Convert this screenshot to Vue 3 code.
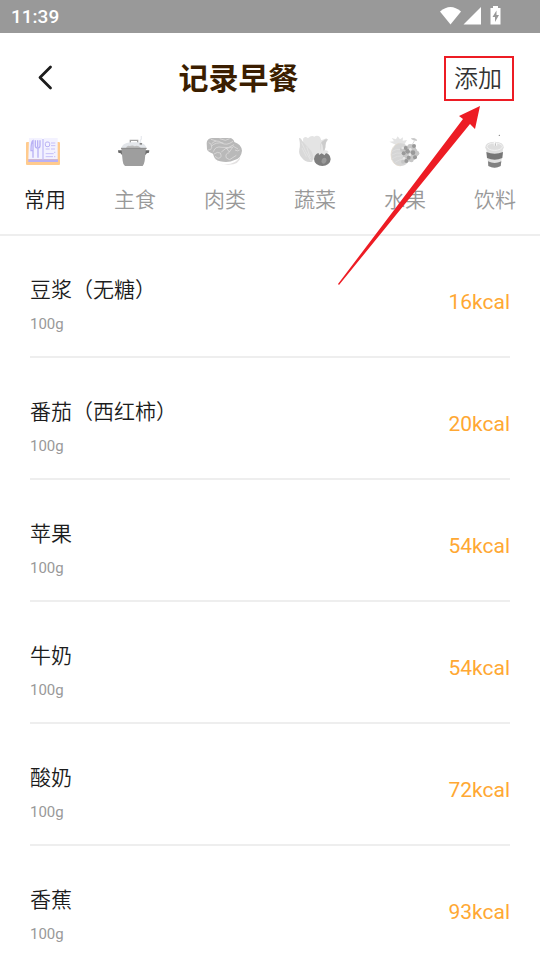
<script setup>
import { ref } from 'vue'

const tabs = ['常用', '主食', '肉类', '蔬菜', '水果', '饮料']
const active = ref(0)

const foods = [
  { name: '豆浆（无糖）', amount: '100g', kcal: 16 },
  { name: '番茄（西红柿）', amount: '100g', kcal: 20 },
  { name: '苹果', amount: '100g', kcal: 54 },
  { name: '牛奶', amount: '100g', kcal: 54 },
  { name: '酸奶', amount: '100g', kcal: 72 },
  { name: '香蕉', amount: '100g', kcal: 93 },
]
</script>

<template>
  <div class="screen">
    <div class="status">
      <span class="clock">11:39</span>
      <svg class="status-icons" width="64" height="22" viewBox="0 0 64 22" aria-hidden="true">
        <path d="M0 5.500Q10.500 -3.500 21 5.500L10.500 18.500Z" fill="#fff" />
        <path d="M41 1V18.500H23.500Z" fill="#fff" />
        <path d="M53 0h5v2h2.500v16.500h-10V2H53Z" fill="#fff" />
        <path d="M56.500 4.500L52.500 11h2.500v5l4-7h-2.500Z" fill="#999" />
      </svg>
    </div>

    <header class="header">
      <button class="back" type="button" aria-label="返回">
        <svg width="16" height="26" viewBox="0 0 16 26">
          <path d="M13.500 2L3 12.500L13.500 23" fill="none" stroke="#1c1c1c" stroke-width="2.800" stroke-linecap="round" stroke-linejoin="round" />
        </svg>
      </button>
      <h1 class="title">记录早餐</h1>
      <div class="action">
        <button class="add" type="button">添加</button>
        <svg class="arrow" width="144" height="182" viewBox="0 0 144 182" aria-hidden="true">
          <path d="M142 1L137 24L132 19L1 180L0 179L125 14L121 11Z" fill="#ed1c24" />
        </svg>
      </div>
    </header>

    <nav class="tabs">
      <button
        v-for="(tab, i) in tabs"
        :key="tab"
        type="button"
        class="tab"
        :class="{ active: i === active }"
        @click="active = i"
      >
        <svg class="tab-icon" width="40" height="36" viewBox="45 27 120 108" aria-hidden="true">
          <g v-if="i === 0">
            <rect x="48" y="51" width="102" height="69" rx="3" fill="#ffcb8e" />
            <path d="M55 103H144V111H55Z" fill="#b9b1f5" />
            <path d="M57 39H95L99 43L103 39H143V102H55Z" fill="#f3f2ff" />
            <path d="M99 42V105" stroke="#c5bff8" stroke-width="4" />
            <path d="M69 98V47Q63 50 63 77H69M84 98V69M76 46V62Q76 69 83 69Q90 69 90 62V46M83 46V66" fill="none" stroke="#b9b1f5" stroke-width="4" />
            <rect x="106" y="51" width="13" height="14" rx="5" fill="none" stroke="#b9b1f5" stroke-width="3" />
            <path d="M123 54h13M123 62h13M107 72h12M123 72h12M107 86h24M132 82h4M107 95h22M132 95h4" stroke="#c5bff8" stroke-width="3" />
          </g>
          <g v-else-if="i === 1">
            <path d="M91 54V46H113V54" fill="none" stroke="#a2a2a2" stroke-width="4" />
            <path d="M122 54Q119 46 124 42V33" fill="none" stroke="#e9ebef" stroke-width="4" />
            <path d="M63 72Q66 54 91 52H117Q138 55 140 72Z" fill="#e3e6ea" />
            <path d="M78 70Q80 60 89 63Q98 59 104 64Q113 59 122 68V72Z" fill="#bdbdbd" />
            <path d="M119 54h7v5h-7Z" fill="#888" />
            <path d="M54 76h13v14q-4-1-5-5l-7-2ZM148 76h-13v14q4-1 5-5l7-2Z" fill="#696969" />
            <path d="M64 70H138L134 108Q132 119 128 123H75Q69 119 68 107Z" fill="#9e9e9e" />
            <path d="M63 70H140" stroke="#888" stroke-width="3" />
          </g>
          <g v-else-if="i === 2">
            <path d="M70 91Q76 111 94 116Q131 124 151 95Q150 118 115 119Q77 121 70 91Z" fill="#e4e2e2" />
            <path d="M50 54Q51 40 66 39H119Q130 40 133 51Q154 58 156 77Q154 99 134 105Q117 114 90 109Q73 105 69 86Q54 82 51 73Z" fill="#b9b9b9" />
            <path d="M56 53Q66 55 65 67Q65 76 54 75M65 56Q79 42 94 53T129 49M63 43L79 48M89 41L106 46L119 41M65 63Q76 51 100 54M70 80Q76 62 96 67T132 59M72 87Q83 79 91 84Q98 99 84 100L75 94M94 81L109 69L118 81L130 64L144 72M108 71L126 66M118 83Q104 85 109 99L119 104L139 91M135 75Q143 80 149 75" fill="none" stroke="#e4e2e2" stroke-width="2" />
          </g>
          <g v-else-if="i === 3">
            <path d="M69 41Q75 32 84 40Q93 30 103 35Q111 29 120 36L124 46L139 40L144 44Q137 48 136 69L130 93L96 106L71 78Z" fill="#e4e4e4" />
            <path d="M57 40Q62 37 67 48L94 78Q103 94 97 110Q78 115 66 99Q55 89 58 72Q62 61 57 40Z" fill="#d9d9d9" />
            <path d="M65 53L77 79L93 108M66 69L79 95M80 65L91 99" fill="none" stroke="#e8e8e8" stroke-width="2" />
            <path d="M122 78Q116 52 132 46Q137 40 144 44Q136 49 136 67L133 78Z" fill="#ccc" />
            <ellipse cx="127" cy="102" rx="25" ry="21" fill="#7e7e7e" />
            <path d="M107 80Q116 73 121 77L122 55Q128 52 130 77Q143 73 146 82L136 86L134 91L125 85L117 90L116 85Z" fill="#e4e4e4" />
            <ellipse cx="132" cy="107" rx="7" ry="9" fill="#999" transform="rotate(25 132 107)" />
          </g>
          <g v-else-if="i === 4">
            <path d="M77 59L58 50L72 49L65 39L78 43L83 34L90 43L99 37L98 47L111 45L104 57Z" fill="#e3e3e3" />
            <ellipse cx="92" cy="89" rx="29" ry="34" fill="#d5d5d5" />
            <path d="M65 80Q79 70 94 74M63 91Q80 80 100 85M65 103Q82 89 104 94M74 113Q89 100 107 103" fill="none" stroke="#dedede" stroke-width="3" />
            <path d="M92 123Q64 121 63 89Q64 60 88 55" fill="none" stroke="#e1d8ca" stroke-width="2" />
            <path d="M126 60L133 48M124 41Q134 37 141 46Q132 48 124 41" fill="#c7c7c7" stroke="#c7c7c7" stroke-width="2" />
            <path d="M100 66L126 58L141 74L146 88L134 104L110 112L98 100Z" fill="#c6c6c6" />
            <g fill="#c6c6c6">
              <circle cx="97" cy="74" r="7" /><circle cx="120" cy="64" r="7" /><circle cx="131" cy="72" r="7" />
              <circle cx="141" cy="85" r="7" /><circle cx="109" cy="96" r="7" /><circle cx="124" cy="105" r="7" />
              <circle cx="99" cy="110" r="6" />
            </g>
            <g fill="#999">
              <circle cx="107" cy="69" r="6" /><circle cx="113" cy="79" r="7" /><circle cx="101" cy="85" r="6" />
              <circle cx="129" cy="83" r="7" /><circle cx="132" cy="63" r="6" /><circle cx="109" cy="108" r="6" />
              <circle cx="135" cy="97" r="6" /><circle cx="116" cy="98" r="6" />
            </g>
            <g fill="#e8e8e8">
              <circle cx="98" cy="69" r="4" /><circle cx="121" cy="73" r="4" /><circle cx="120" cy="89" r="4" /><circle cx="102" cy="100" r="4" />
            </g>
          </g>
          <g v-else>
            <circle cx="118" cy="31" r="2" fill="#777" />
            <path d="M79 73H129L122 123Q104 134 85 123Z" fill="#e1e1e1" />
            <path d="M79 81Q104 91 129 81L127 99Q104 109 81 99Z" fill="#777" />
            <path d="M84 109Q104 119 124 109L122 123Q104 134 85 123Z" fill="#818181" />
            <path d="M76 67Q76 51 104 50Q131 51 131 67Q131 82 104 83Q76 82 76 67Z" fill="#dedede" />
            <ellipse cx="104" cy="65" rx="23" ry="11" fill="none" stroke="#f2f2f2" stroke-width="3" />
            <path d="M103 50V62M110 55V62" stroke="#fff" stroke-width="3" />
            <path d="M106 55V62" stroke="#aaa" stroke-width="2" />
          </g>
        </svg>
        <span>{{ tab }}</span>
      </button>
    </nav>

    <ul class="list">
      <li v-for="food in foods" :key="food.name" class="row">
        <div class="info">
          <span class="name">{{ food.name }}</span>
          <span class="amount">{{ food.amount }}</span>
        </div>
        <span class="kcal">{{ food.kcal }}kcal</span>
      </li>
    </ul>
  </div>
</template>

<style>
body {
  margin: 0;
  background: #fff;
}
</style>

<style scoped>
.screen {
  display: flex;
  flex-direction: column;
  height: 100vh;
  overflow: hidden;
  font-family: Roboto, "Noto Sans CJK SC", sans-serif;
  color: #1c1c1c;
}

button {
  padding: 0;
  border: 0;
  background: none;
  font: inherit;
  color: inherit;
  cursor: pointer;
}

.status {
  flex: none;
  display: flex;
  align-items: center;
  justify-content: space-between;
  height: 33px;
  padding: 0 36px 0 11px;
  background: #999;
  color: #fff;
}

.clock {
  font-size: 19px;
  font-weight: 500;
  line-height: 33px;
}

.header {
  flex: none;
  display: flex;
  align-items: center;
  justify-content: space-between;
  height: 90px;
  padding: 0 26px 0 37px;
}

.back {
  display: flex;
}

.title {
  margin: 0 20px 0 0;
  padding-top: 2px;
  font-size: 30px;
  font-weight: 700;
  line-height: 44px;
  color: #3b1e00;
}

.action {
  position: relative;
}

.add {
  display: block;
  box-sizing: border-box;
  height: 45px;
  padding: 2px 10px 0 8px;
  border: 2px solid #ed1c24;
  font-size: 24px;
  font-weight: 350;
  line-height: 39px;
  color: #333;
}

.arrow {
  position: absolute;
  top: 49px;
  right: 32px;
  z-index: 1;
  pointer-events: none;
}

.tabs {
  flex: none;
  display: flex;
  border-bottom: 2px solid #eee;
}

.tab {
  flex: 1;
  display: flex;
  flex-direction: column;
  align-items: center;
  gap: 15px;
  padding: 11px 0 19px;
  font-size: 21px;
  font-weight: 350;
  line-height: 30px;
  color: #999;
}

.tab.active {
  color: #1c1c1c;
}

.list {
  flex: 1;
  min-height: 0;
  margin: 0;
  padding: 0 30px;
  overflow-y: auto;
  scrollbar-width: none;
  list-style: none;
}

.row {
  display: flex;
  align-items: center;
  justify-content: space-between;
  padding: 36px 0 22px;
  border-bottom: 2px solid #eee;
}

.info {
  display: flex;
  flex-direction: column;
  gap: 6px;
}

.name {
  font-size: 21px;
  font-weight: 350;
  line-height: 36px;
}

.amount {
  font-size: 15px;
  font-weight: 400;
  line-height: 20px;
  color: #999;
}

.kcal {
  padding-bottom: 2px;
  font-size: 21px;
  font-weight: 400;
  line-height: 32px;
  color: #ffa833;
}
</style>
